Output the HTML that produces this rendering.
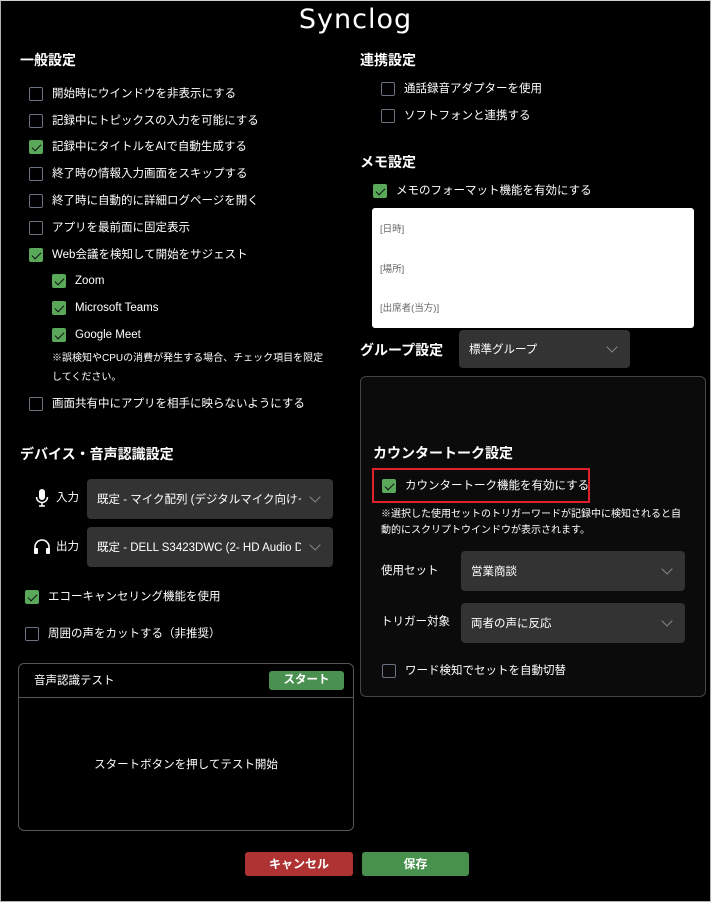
<!DOCTYPE html>
<html><head><meta charset="utf-8"><style>
*{box-sizing:border-box;margin:0;padding:0}
body{width:711px;height:902px;background:#000;color:#fff;font-family:"Liberation Sans","Noto Sans CJK JP",sans-serif;position:relative;overflow:hidden}
.a{position:absolute;white-space:nowrap}
.h{font-size:14px;font-weight:bold}
.t{font-size:11.5px;line-height:14px}
.cb{position:absolute;width:14px;height:14px;border:1.5px solid #6b7280;border-radius:2px}
.on{background:#5aa95a;border-color:#5aa95a}
.on:after{content:"";position:absolute;left:3.5px;top:0.5px;width:4px;height:8px;border:solid #111;border-width:0 1.6px 1.6px 0;transform:rotate(45deg)}
.sel{position:absolute;background:#333;border-radius:4px;font-size:11.5px;padding-left:10px;display:flex;align-items:center;overflow:hidden;white-space:nowrap}
.sel span{flex:1;overflow:hidden;white-space:nowrap}
.chev{width:8px;height:8px;border:solid #888;border-width:0 1.5px 1.5px 0;transform:rotate(45deg);margin:0 14px 4px 10px;flex:none}
</style></head><body>
<div class="a" style="left:0;top:0;width:711px;height:902px;border:1px solid #b0b0b0;border-top-color:#cfcfcf"></div>
<div class="a" style="left:0;width:711px;text-align:center;top:4px;font-size:27px;letter-spacing:1px;font-family:'DejaVu Sans','Liberation Sans',sans-serif">Synclog</div>

<div class="a h" style="left:20px;top:50px">一般設定</div>
<div class="cb" style="left:29px;top:87px"></div><div class="a t" style="left:52px;top:87px">開始時にウインドウを非表示にする</div>
<div class="cb" style="left:29px;top:114px"></div><div class="a t" style="left:52px;top:114px">記録中にトピックスの入力を可能にする</div>
<div class="cb on" style="left:29px;top:140px"></div><div class="a t" style="left:52px;top:140px">記録中にタイトルをAIで自動生成する</div>
<div class="cb" style="left:29px;top:167px"></div><div class="a t" style="left:52px;top:167px">終了時の情報入力画面をスキップする</div>
<div class="cb" style="left:29px;top:194px"></div><div class="a t" style="left:52px;top:194px">終了時に自動的に詳細ログページを開く</div>
<div class="cb" style="left:29px;top:221px"></div><div class="a t" style="left:52px;top:221px">アプリを最前面に固定表示</div>
<div class="cb on" style="left:29px;top:248px"></div><div class="a t" style="left:52px;top:248px">Web会議を検知して開始をサジェスト</div>
<div class="cb on" style="left:52px;top:274px"></div><div class="a t" style="left:75px;top:274px">Zoom</div>
<div class="cb on" style="left:52px;top:301px"></div><div class="a t" style="left:75px;top:301px">Microsoft Teams</div>
<div class="cb on" style="left:52px;top:328px"></div><div class="a t" style="left:75px;top:328px">Google Meet</div>
<div class="a" style="left:52px;top:349px;font-size:10px;line-height:19px;white-space:normal;width:280px">※誤検知やCPUの消費が発生する場合、チェック項目を限定してください。</div>
<div class="cb" style="left:29px;top:397px"></div><div class="a t" style="left:52px;top:397px">画面共有中にアプリを相手に映らないようにする</div>

<div class="a h" style="left:20px;top:444px">デバイス・音声認識設定</div>
<svg class="a" style="left:35px;top:489px" width="14" height="18" viewBox="0 0 14 18"><rect x="4" y="0" width="6" height="11" rx="3" fill="#fff"/><path d="M1.5 8a5.5 5.5 0 0 0 11 0M7 13.5V17M4 17h6" stroke="#fff" stroke-width="1.5" fill="none"/></svg>
<div class="a t" style="left:56px;top:491px">入力</div>
<div class="sel" style="left:87px;top:479px;width:246px;height:40px"><span>既定 - マイク配列 (デジタルマイク向けインテル®</span><i class="chev"></i></div>
<svg class="a" style="left:33px;top:538px" width="18" height="17" viewBox="0 0 18 17"><path d="M2 14V9a7 7 0 0 1 14 0v5" stroke="#fff" stroke-width="1.6" fill="none"/><rect x="1" y="10" width="4" height="6" rx="1" fill="#fff"/><rect x="13" y="10" width="4" height="6" rx="1" fill="#fff"/></svg>
<div class="a t" style="left:56px;top:540px">出力</div>
<div class="sel" style="left:87px;top:527px;width:246px;height:40px"><span>既定 - DELL S3423DWC (2- HD Audio Driver</span><i class="chev"></i></div>
<div class="cb on" style="left:25px;top:590px"></div><div class="a t" style="left:48px;top:590px">エコーキャンセリング機能を使用</div>
<div class="cb" style="left:25px;top:627px"></div><div class="a t" style="left:48px;top:627px">周囲の声をカットする（非推奨）</div>

<div class="a" style="left:18px;top:663px;width:336px;height:168px;border:1px solid #555;border-radius:6px"></div>
<div class="a" style="left:18px;top:697px;width:336px;height:1px;background:#555"></div>
<div class="a t" style="left:34px;top:674px">音声認識テスト</div>
<div class="a" style="left:269px;top:671px;width:75px;height:19px;background:#4a9050;border-radius:3px;font-size:11.5px;font-weight:bold;text-align:center;line-height:19px">スタート</div>
<div class="a t" style="left:18px;width:336px;text-align:center;top:758px">スタートボタンを押してテスト開始</div>

<div class="a" style="left:245px;top:852px;width:108px;height:24px;background:#b03333;border-radius:3px;font-size:12px;font-weight:bold;text-align:center;line-height:24px">キャンセル</div>
<div class="a" style="left:362px;top:852px;width:107px;height:24px;background:#47914d;border-radius:3px;font-size:12px;font-weight:bold;text-align:center;line-height:24px">保存</div>

<div class="a h" style="left:360px;top:50px">連携設定</div>
<div class="cb" style="left:381px;top:82px"></div><div class="a t" style="left:404px;top:82px">通話録音アダプターを使用</div>
<div class="cb" style="left:381px;top:109px"></div><div class="a t" style="left:404px;top:109px">ソフトフォンと連携する</div>
<div class="a h" style="left:360px;top:152px">メモ設定</div>
<div class="cb on" style="left:373px;top:184px"></div><div class="a t" style="left:396px;top:184px">メモのフォーマット機能を有効にする</div>
<div class="a" style="left:372px;top:208px;width:322px;height:120px;background:#fff;border-radius:3px"></div>
<div class="a" style="left:380px;top:221px;font-size:9.5px;color:#666">[日時]</div>
<div class="a" style="left:380px;top:261px;font-size:9.5px;color:#666">[場所]</div>
<div class="a" style="left:380px;top:300px;font-size:9.5px;color:#666">[出席者(当方)]</div>
<div class="a h" style="left:360px;top:340px">グループ設定</div>
<div class="sel" style="left:459px;top:330px;width:171px;height:38px"><span>標準グループ</span><i class="chev"></i></div>

<div class="a" style="left:360px;top:376px;width:346px;height:321px;background:#0b0b0b;border:1px solid #444;border-radius:6px"></div>
<div class="a h" style="left:373px;top:443px">カウンタートーク設定</div>
<div class="a" style="left:372px;top:468px;width:218px;height:35px;border:2px solid #e0202a"></div>
<div class="cb on" style="left:382px;top:479px"></div><div class="a t" style="left:405px;top:479px">カウンタートーク機能を有効にする</div>
<div class="a" style="left:381px;top:507px;font-size:10px;line-height:16px;white-space:normal;width:305px">※選択した使用セットのトリガーワードが記録中に検知されると自動的にスクリプトウインドウが表示されます。</div>
<div class="a t" style="left:381px;top:564px">使用セット</div>
<div class="sel" style="left:461px;top:551px;width:224px;height:40px"><span>営業商談</span><i class="chev"></i></div>
<div class="a t" style="left:381px;top:615px">トリガー対象</div>
<div class="sel" style="left:461px;top:603px;width:224px;height:40px"><span>両者の声に反応</span><i class="chev"></i></div>
<div class="cb" style="left:382px;top:664px"></div><div class="a t" style="left:405px;top:664px">ワード検知でセットを自動切替</div>
</body></html>
